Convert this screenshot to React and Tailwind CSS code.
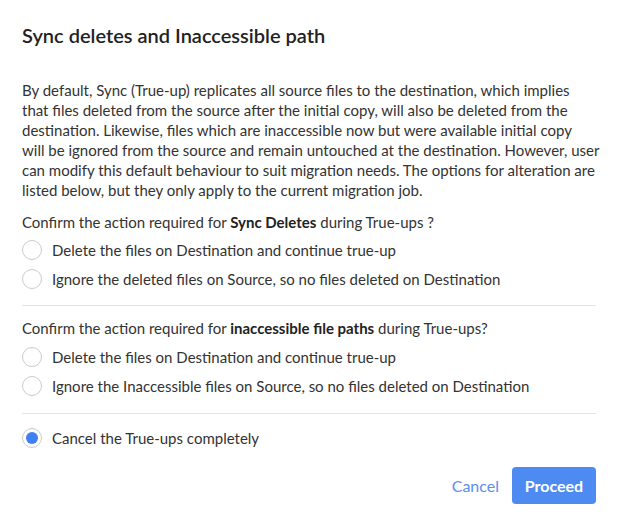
import React from 'react';

// Dialog asking how true-ups should treat deleted and unreachable files.
const Radio = ({ checked, label }) => (
    <label className="flex h-[29px] shrink-0 items-center">
        <span className="flex h-[20px] w-[20px] shrink-0 items-center justify-center rounded-full border-[1.5px] border-[#cbcbcb] bg-white">
            {checked && <span className="h-[12px] w-[12px] rounded-full bg-[#3f80f2]" />}
        </span>
        <span className="ml-[10px] text-[15px] leading-[20px] text-[#333]">{label}</span>
    </label>
);

const App = () => {
    return (
        <div
            className="flex h-[522px] w-[618px] flex-col overflow-hidden bg-white px-[22px] text-[#333]"
            style={{ fontFamily: 'Lato, "Liberation Sans", sans-serif' }}
        >
            <h1 className="mt-[21px] shrink-0 text-[20px] font-semibold leading-[28px] text-[#222]">
                Sync deletes and Inaccessible path
            </h1>

            <p className="mt-[31px] shrink-0 whitespace-nowrap text-[15px] leading-[20px]">
                By default, Sync (True-up) replicates all source files to the destination, which implies<br />
                that files deleted from the source after the initial copy, will also be deleted from the<br />
                destination. Likewise, files which are inaccessible now but were available initial copy<br />
                will be ignored from the source and remain untouched at the destination. However, user<br />
                can modify this default behaviour to suit migration needs. The options for alteration are<br />
                listed below, but they only apply to the current migration job.
            </p>

            <p className="mt-[12px] shrink-0 text-[15px] leading-[20px]">
                Confirm the action required for <b className="font-bold text-[#222]">Sync Deletes</b> during True-ups ?
            </p>
            <div className="mt-[3px] flex shrink-0 flex-col">
                <Radio label="Delete the files on Destination and continue true-up" />
                <Radio label="Ignore the deleted files on Source, so no files deleted on Destination" />
            </div>

            <div className="mt-[12px] shrink-0 border-t border-[#e4e4e4]" />

            <p className="mt-[12px] shrink-0 text-[15px] leading-[20px]">
                Confirm the action required for <b className="font-bold text-[#222]">inaccessible file paths</b> during True-ups?
            </p>
            <div className="mt-[4px] flex shrink-0 flex-col">
                <Radio label="Delete the files on Destination and continue true-up" />
                <Radio label="Ignore the Inaccessible files on Source, so no files deleted on Destination" />
            </div>

            <div className="mt-[13px] shrink-0 border-t border-[#e4e4e4]" />

            <div className="mt-[9px] shrink-0">
                <Radio checked label="Cancel the True-ups completely" />
            </div>

            <div className="mt-[15px] flex shrink-0 items-center justify-end">
                <button className="text-[16px] text-[#5b8ef0]">Cancel</button>
                <button className="ml-[13px] h-[37px] w-[84px] rounded-[4px] bg-[#4d8af2] text-[16px] font-bold text-white">
                    Proceed
                </button>
            </div>
        </div>
    );
};

export default App;
